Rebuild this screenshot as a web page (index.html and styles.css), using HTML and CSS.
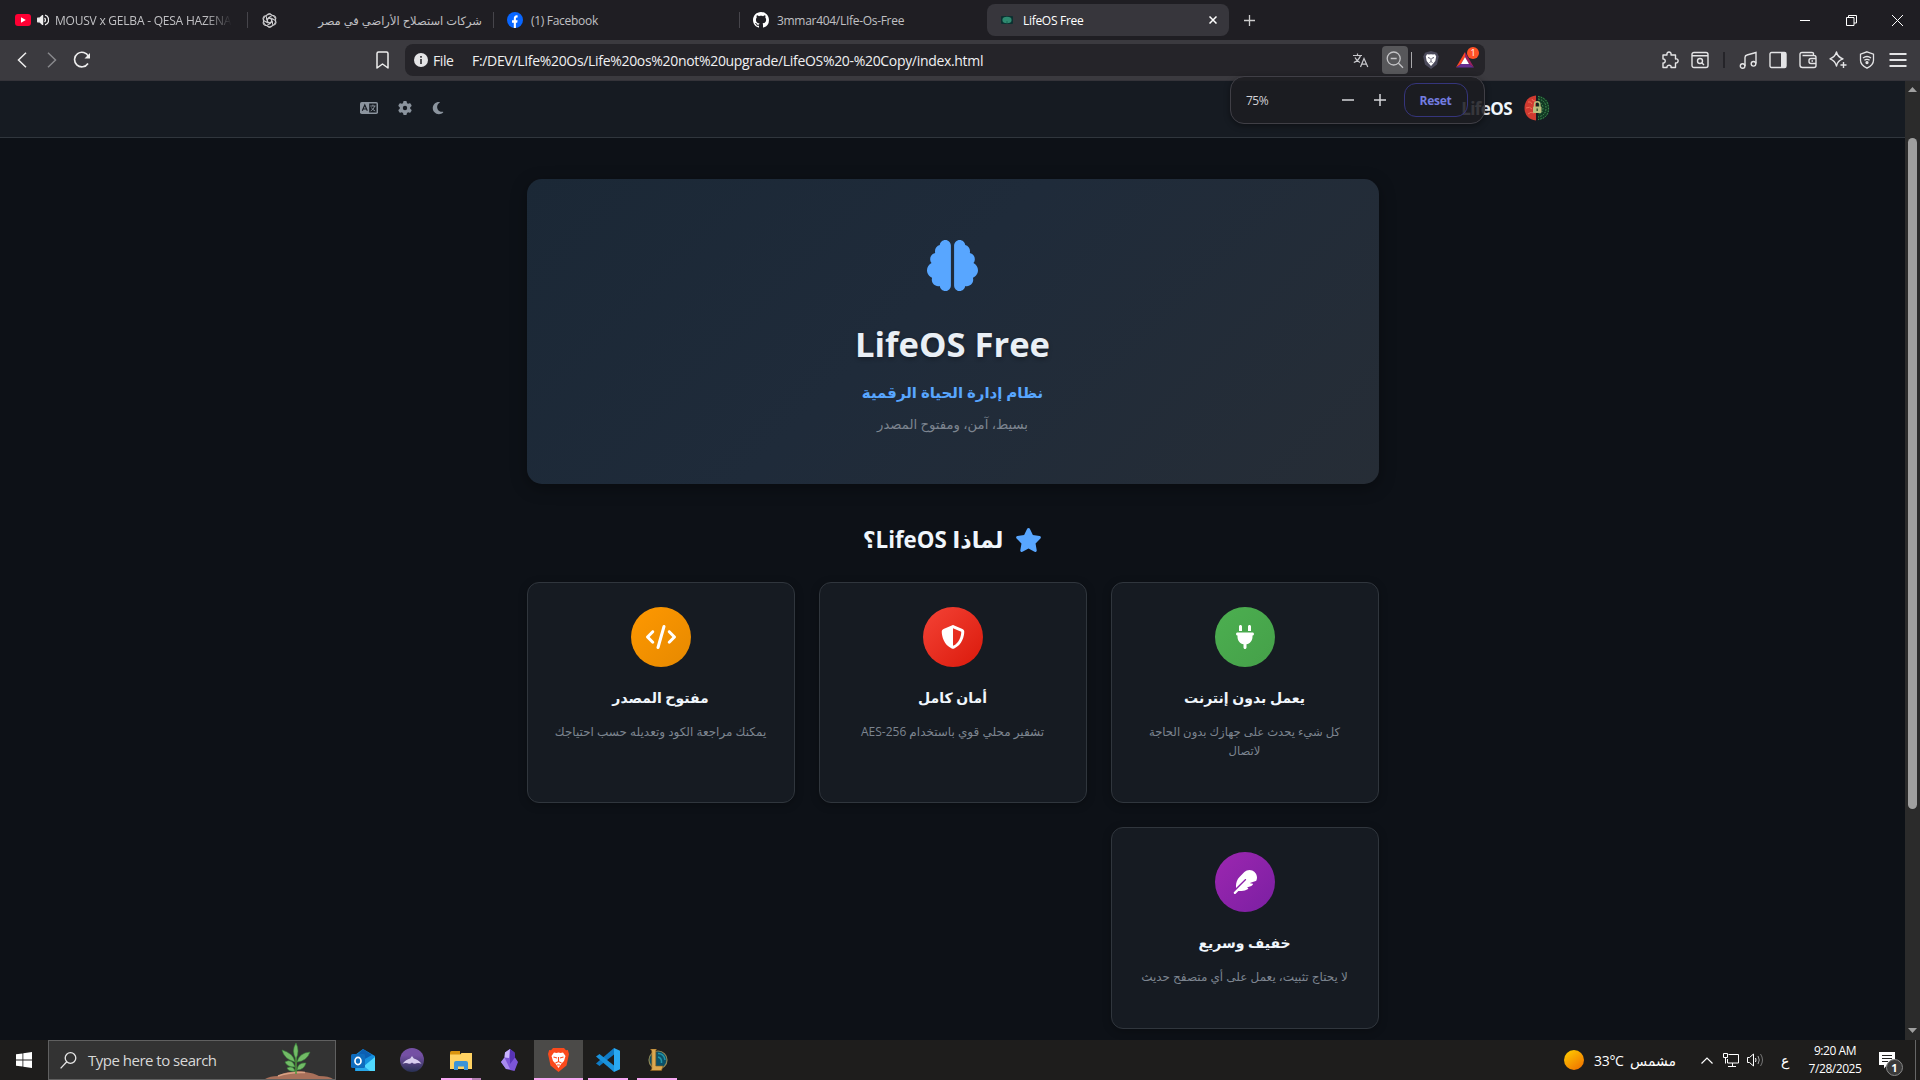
FILE: index.html
```
<!DOCTYPE html>
<html lang="en">
<head>
<meta charset="utf-8">
<title>LifeOS Free</title>
<link rel="stylesheet" href="styles.css">
</head>
<body>
<div class="screen">
  <div class="tabs">
    <div class="tab t-yt">
      <svg width="16" height="12" viewBox="0 0 16 12"><rect width="16" height="12" rx="3" fill="#f03"/><path d="M6 3.3v5.4L10.8 6z" fill="#fff"/></svg>
      <svg class="spk" width="12" height="12" viewBox="0 0 12 12" fill="none" stroke="#eee" stroke-width="1.3"><path d="M.7 4.2h2L5.6 1.6v8.8L2.7 7.8h-2z" fill="#eee" stroke-linejoin="round"/><path d="M7.5 4a2.6 2.6 0 0 1 0 4M8 1.2a5 5 0 0 1 0 9.6"/></svg>
      <span class="fade">MOUSV x GELBA - QESA HAZENA</span>
    </div>
    <i class="sep"></i>
    <div class="tab t-gpt">
      <svg width="15" height="15" viewBox="0 0 16 16" fill="none" stroke="#d0d0d2" stroke-width="1.050"><g id="k"><path d="M8 5.400L4.800 7.200V3.600A3 3 0 0 1 10.400 2.100M8 5.400l3.200 1.800"/></g><use href="#k" transform="rotate(60 8 8)"/><use href="#k" transform="rotate(120 8 8)"/><use href="#k" transform="rotate(180 8 8)"/><use href="#k" transform="rotate(240 8 8)"/><use href="#k" transform="rotate(300 8 8)"/><circle cx="8" cy="8" r="6.500"/></svg>
      <span class="ar" dir="rtl">شركات استصلاح الأراضي في مصر</span>
    </div>
    <i class="sep"></i>
    <div class="tab t-fb">
      <svg width="16" height="16" viewBox="0 0 16 16"><circle cx="8" cy="8" r="8" fill="#0866ff"/><path d="M6.8 16v-5.3H5V8.2h1.8V7c0-2.700 1.200-3.900 3.800-3.600v2.100c-1.200 0-1.700.1-1.700 1.300v1.400h1.700l-.4 2.500H8.900V16z" fill="#fff"/></svg>
      <span class="tx-fb">(1) Facebook</span>
    </div>
    <i class="sep"></i>
    <div class="tab t-gh">
      <svg width="16" height="16" viewBox="0 0 16 16" fill="#fff"><path d="M8 0C3.580 0 0 3.580 0 8c0 3.540 2.290 6.530 5.470 7.590.4.070.55-.17.55-.38 0-.19-.01-.82-.01-1.490-2.010.37-2.530-.49-2.690-.94-.09-.23-.48-.94-.82-1.130-.28-.15-.68-.52-.01-.53.63-.01 1.080.58 1.230.82.72 1.210 1.870.87 2.330.66.07-.52.28-.87.51-1.070-1.780-.2-3.640-.89-3.640-3.950 0-.87.31-1.590.82-2.150-.08-.2-.36-1.020.08-2.120 0 0 .67-.21 2.200.82.64-.18 1.320-.27 2-.27s1.360.09 2 .27c1.530-1.040 2.200-.82 2.200-.82.44 1.100.16 1.920.08 2.120.51.56.82 1.270.82 2.150 0 3.070-1.870 3.750-3.650 3.950.29.25.54.73.54 1.480 0 1.070-.01 1.930-.01 2.200 0 .21.15.46.55.38A8.010 8.010 0 0 0 16 8c0-4.420-3.580-8-8-8z"/></svg>
      <span class="tx-gh">3mmar404/LIfe-Os-Free</span>
    </div>
    <div class="tab active">
      <svg width="12" height="8" viewBox="0 0 12 8"><rect width="12" height="8" rx="1" fill="#0c3030"/><ellipse cx="6" cy="4" rx="4.600" ry="3.200" fill="#2f8a70"/><path d="M6 5v2" stroke="#0c4a40" stroke-width=".6"/></svg>
      <span class="tx-life">LifeOS Free</span>
      <svg class="x" width="8" height="8" viewBox="0 0 8 8" stroke="#fff" stroke-width="1.500"><path d="M.5.5l7 7M7.500.5l-7 7"/></svg>
    </div>
    <svg class="plus" width="11" height="11" viewBox="0 0 11 11" stroke="#ccc" stroke-width="1.300"><path d="M5.500 0v11M0 5.500h11"/></svg>
    <div class="win">
      <svg width="11" height="11" viewBox="0 0 11 11" stroke="#fff"><path d="M0 5.500h10"/></svg>
      <svg width="11" height="11" viewBox="0 0 11 11" stroke="#fff" fill="none"><path d="M.5 2.500h7.500v8H.5zM2.500 2.500v-2h8v7.500H8"/></svg>
      <svg width="11" height="11" viewBox="0 0 11 11" stroke="#fff"><path d="M0 0l11 11M11 0L0 11"/></svg>
    </div>
  </div>

  <div class="toolbar">
    <svg class="back" width="10" height="16" viewBox="0 0 10 16" fill="none" stroke="#eee" stroke-width="1.500"><path d="M9 .8 1.500 8 9 15.200"/></svg>
    <svg class="fwd" width="10" height="16" viewBox="0 0 10 16" fill="none" stroke="#88888c" stroke-width="1.500"><path d="M1 .8 8.500 8 1 15.200"/></svg>
    <svg class="reload" width="18" height="18" viewBox="0 0 18 18" fill="none" stroke="#eee" stroke-width="1.600"><path d="M15 12.500A7.300 7.300 0 1 1 15.500 5.500"/><path d="M17 2v5.500h-5.500z" fill="#eee" stroke="none"/></svg>
    <svg class="bm" width="13" height="18" viewBox="0 0 13 18" fill="none" stroke="#eee" stroke-width="1.500" stroke-linejoin="round"><path d="M1 2.500Q1 1 2.500 1h8Q12 1 12 2.500V17l-5.500-4L1 17z"/></svg>
    <div class="url">
      <svg width="14" height="14" viewBox="0 0 14 14"><circle cx="7" cy="7" r="7" fill="#e4e4e6"/><path d="M7 6v5M7 3v1.700" stroke="#2a292e" stroke-width="1.600"/></svg>
      <span class="file">File</span>
      <span class="path">F:/DEV/LIfe%20Os/Life%20os%20not%20upgrade/LifeOS%20-%20Copy/index.html</span>
      <div class="uicons">
        <svg width="16" height="15" viewBox="0 0 16 15" fill="none" stroke="#c8c8cc" stroke-width="1.200"><path d="M0 2.500h9M4.500.5v2M7.500 2.500Q6 7.500 .8 9.500M2 4.500q1.500 3.500 5 5M7.500 14l3.500-8.500L14.800 14M8.700 11.200h4.800"/></svg>
        <div class="zb"><svg width="18" height="18" viewBox="0 0 18 18" fill="none" stroke="#c4c4c7" stroke-width="1.300"><circle cx="7.700" cy="7.500" r="6.500"/><path d="M12.500 12.300l4.500 4.500M4.700 7.500h6"/></svg></div>
        <i></i>
        <svg width="16" height="18" viewBox="0 0 16 18"><path d="M8 0l6 1.800 1.800 3.700L14 13.500 8 18 2 13.500.2 5.500 2 1.800z" fill="#4c4b5c"/><path d="M4 3.300l2 .3 2-.4 2 .4 2-.3 1.200 2.200-.9 4.500-2 2.500L8 15l-2.300-2.500-2-2.500-.9-4.500z" fill="#fff"/><path d="M5 6.500l2 .8M11 6.500l-2 .8M8 7v3M6.500 11.500L8 10.500l1.500 1" stroke="#4c4b5c" stroke-width=".9" fill="none"/></svg>
        <div class="bat"><svg width="18" height="16" viewBox="0 0 18 16"><path d="M9 0v5L5 12l-5 3.500z" fill="#ff4724"/><path d="M9 0l9 15.500L13 12 9 5z" fill="#9e1f63"/><path d="M0 15.500L5 12h8l5 3.500z" fill="#662d91"/><path d="M9 5l4 7H5z" fill="#fff"/></svg><b>1</b></div>
      </div>
    </div>
    <div class="ext">
      <svg width="18" height="18" viewBox="0 0 18 18" fill="none" stroke="#e4e4e6" stroke-width="1.400" stroke-linejoin="round"><path d="M2 4h4c-1-4 5-4 4 0h4.500v4c3.500-1 3.500 4.500 0 4v4.500H10c1-3-4.500-3-4 0H2v-4.500c3 .5 3-4.500 0-4z"/></svg>
      <svg width="18" height="18" viewBox="0 0 18 18" fill="none" stroke="#e4e4e6" stroke-width="1.400"><rect x="1" y="1.500" width="16" height="15" rx="2"/><path d="M1 4.700h16M11 12l2 2"/><circle cx="9" cy="10" r="2.500"/></svg>
      <i></i>
      <svg width="18" height="18" viewBox="0 0 18 18" fill="none" stroke="#e4e4e6" stroke-width="1.400"><path d="M6 15V6.500Q6 4.500 8 4L17 1.500V12.500"/><circle cx="3.600" cy="15" r="2.300"/><circle cx="14.500" cy="12.800" r="2.300"/></svg>
      <svg width="18" height="18" viewBox="0 0 18 18" fill="none" stroke="#e4e4e6" stroke-width="1.400"><rect x="1" y="1.500" width="16" height="15" rx="1.500"/><path d="M12 2h5v14h-5z" fill="#e4e4e6" stroke="none"/></svg>
      <svg width="18" height="18" viewBox="0 0 18 18" fill="none" stroke="#e4e4e6" stroke-width="1.400"><path d="M14.500 4.500V2.500Q14.500 1.500 13 1.500H3Q1 1.500 1 3.500V14q0 2.500 2.500 2.500H15q2 0 2-2V6.500q0-2-2-2H3.500M17 7.500h-5q-2 0-2 2v1q0 2 2 2h5M12.500 10h1.500"/></svg>
      <svg width="18" height="18" viewBox="0 0 18 18" fill="none" stroke="#e4e4e6" stroke-width="1.400" stroke-linejoin="round"><path d="M7.500 1q1 5 6.500 6.800Q8.500 9.500 7.500 15 6 9.500 1 7.800 6 6 7.500 1zM14.500 11v6M11.500 14h6"/></svg>
      <svg width="16" height="18" viewBox="0 0 16 18" fill="none" stroke="#e4e4e6" stroke-width="1.300"><path d="M8 .8l6.500 2.400v6Q14.500 14 8 17.200 1.500 14 1.500 9.200v-6zM4 7q4-3 8 0M5.400 9.300q2.600-2 5.200 0"/><circle cx="8" cy="11.600" r="1" fill="#e4e4e6"/></svg>
      <svg class="burger" width="18" height="16" viewBox="0 0 18 16" stroke="#e4e4e6" stroke-width="1.800"><path d="M.5 2h17M.5 8h17M.5 14h17"/></svg>
    </div>
    <div class="zoompop">
      <span class="pct">75%</span>
      <svg class="zm" width="12" height="12" viewBox="0 0 12 12" stroke="#d6d6da" stroke-width="1.500"><path d="M0 6h12"/></svg>
      <svg class="zp" width="12" height="12" viewBox="0 0 12 12" stroke="#d6d6da" stroke-width="1.500"><path d="M0 6h12M6 0v12"/></svg>
      <span class="reset">Reset</span>
    </div>
  </div>

  <div class="view">
    <div class="page" dir="rtl">
      <div class="nav">
        <div class="brand">
          <svg width="26" height="26" viewBox="0 0 26 26"><path d="M12 .5v25C5 25 .5 20 .5 13S5 1 12 .5z" fill="#cf3a30"/><path d="M4 7q3-1 4 2M2 13q4-2 6 1M4 19q3-3 6-1M8 4q0 2 3 2" stroke="#f06a55" fill="none"/><path d="M14 .5q11 2 11.500 12.500Q25 23.500 14 25.500z" fill="#123a24"/><g fill="none" stroke="#4a9a58" stroke-dasharray="1.500 1.300"><path d="M14 1.500q10 1.500 10.500 11.500T14 24.500"/><path d="M14 4q8 1.500 8 9t-8 9M14 7q5 1 5 6t-5 6"/></g><path d="M10.500 12V9.500a2.700 2.700 0 0 1 5.400 0V12" fill="none" stroke="#b9bd7c" stroke-width="1.400"/><rect x="9" y="11.500" width="8.500" height="6.500" rx="1" fill="#b9bd7c"/><path d="M13.200 13.500v2.500" stroke="#3c5a35" stroke-width="1.500"/></svg>
          <span dir="ltr">LifeOS</span>
        </div>
        <div class="nicons">
          <svg width="12" height="14" viewBox="0 0 384 512" fill="#8b949e"><path d="M223.500 32C100 32 0 132.300 0 256S100 480 223.500 480c60.600 0 115.500-24.200 155.800-63.400c5-4.900 6.300-12.500 3.100-18.700s-10.100-9.700-17-8.500c-9.800 1.700-19.800 2.600-30.100 2.600c-96.900 0-175.500-78.800-175.500-176c0-65.800 36-123.100 89.300-153.300c6.100-3.500 9.200-10.500 7.700-17.300s-7.300-11.900-14.300-12.500c-6.300-.5-12.600-.8-19-.8z"/></svg>
          <svg width="14" height="14" viewBox="0 0 512 512" fill="#8b949e"><path d="M495.900 166.600c3.200 8.700 .5 18.400-6.400 24.600l-43.300 39.400c1.100 8.300 1.700 16.800 1.700 25.400s-.6 17.100-1.700 25.400l43.300 39.400c6.900 6.200 9.600 15.900 6.400 24.600c-4.400 11.900-9.700 23.300-15.800 34.300l-4.700 8.100c-6.600 11-14 21.400-22.100 31.200c-5.900 7.200-15.700 9.600-24.500 6.800l-55.700-17.700c-13.400 10.300-28.200 18.900-44 25.400l-12.500 57.100c-2 9.100-9 16.300-18.200 17.800c-13.800 2.300-28 3.500-42.500 3.500s-28.700-1.200-42.500-3.500c-9.200-1.500-16.200-8.700-18.200-17.800l-12.500-57.100c-15.800-6.500-30.600-15.100-44-25.400L83.100 425.900c-8.800 2.800-18.600 .3-24.500-6.800c-8.100-9.800-15.500-20.200-22.100-31.200l-4.700-8.100c-6.100-11-11.400-22.400-15.800-34.300c-3.200-8.700-.5-18.400 6.400-24.600l43.300-39.400C64.600 273.100 64 264.600 64 256s.6-17.100 1.700-25.400L22.400 191.200c-6.900-6.200-9.600-15.900-6.400-24.600c4.400-11.900 9.700-23.300 15.800-34.300l4.700-8.100c6.600-11 14-21.400 22.100-31.200c5.900-7.200 15.700-9.600 24.500-6.800l55.700 17.700c13.400-10.300 28.200-18.900 44-25.400l12.500-57.100c2-9.100 9-16.300 18.200-17.800C227.300 1.200 241.500 0 256 0s28.700 1.200 42.500 3.500c9.200 1.500 16.200 8.700 18.200 17.800l12.500 57.100c15.800 6.500 30.600 15.100 44 25.400l55.700-17.700c8.800-2.800 18.600-.3 24.500 6.800c8.100 9.800 15.500 20.200 22.100 31.200l4.700 8.100c6.100 11 11.400 22.400 15.800 34.300zM256 336a80 80 0 1 0 0-160 80 80 0 1 0 0 160z"/></svg>
          <svg width="18" height="12" viewBox="0 0 18 12"><rect width="18" height="12" rx="1.800" fill="#8b949e"/><rect x="9.200" y="1.500" width="7.300" height="9" fill="#161b22"/><path d="M2.300 8.800L4.800 3l2.500 5.800M3.200 7h3.200" fill="none" stroke="#161b22" stroke-width="1.100"/><path d="M10.200 4h5.400M12.900 2.600V4M14.700 4q-.8 3.400-4 5M11.400 5.500q1 2.300 3.800 3.500" fill="none" stroke="#8b949e" stroke-width=".9"/></svg>
        </div>
      </div>
      <div class="main">
        <div class="hero">
          <svg width="51" height="51" viewBox="0 0 512 512" fill="#58a6ff"><path d="M184 0c30.900 0 56 25.100 56 56V456c0 30.900-25.100 56-56 56c-28.900 0-52.700-21.900-55.700-50.100c-5.200 1.400-10.700 2.100-16.300 2.100c-35.300 0-64-28.700-64-64c0-7.400 1.300-14.600 3.600-21.200C21.400 367.400 0 338.200 0 304c0-31.900 18.700-59.500 45.800-72.300C37.100 220.800 32 207 32 192c0-30.700 21.600-56.300 50.400-62.600C80.800 123.900 80 118 80 112c0-29.900 20.600-55.100 48.300-62.100C131.300 21.900 155.100 0 184 0zM328 0c28.900 0 52.600 21.900 55.700 49.900c27.800 7 48.300 32.100 48.300 62.100c0 6-.8 11.900-2.400 17.400c28.800 6.200 50.400 31.900 50.400 62.600c0 15-5.100 28.800-13.800 39.700C493.300 244.500 512 272.100 512 304c0 34.200-21.400 63.400-51.600 74.800c2.300 6.600 3.600 13.800 3.600 21.200c0 35.300-28.700 64-64 64c-5.600 0-11.100-.7-16.300-2.100c-3 28.200-26.800 50.100-55.700 50.100c-30.900 0-56-25.100-56-56V56c0-30.900 25.100-56 56-56z"/></svg>
          <h1 dir="ltr">LifeOS Free</h1>
          <h3>نظام إدارة الحياة الرقمية</h3>
          <p>بسيط، آمن، ومفتوح المصدر</p>
        </div>
        <div class="why">
          <svg width="27" height="24" viewBox="0 0 576 512" fill="#58a6ff"><path d="M316.900 18C311.600 7 300.400 0 288.100 0s-23.400 7-28.800 18L195 150.300 51.400 171.500c-12 1.800-22 10.200-25.700 21.700s-.7 24.200 7.900 32.700L137.800 329 113.200 474.700c-2 12 3 24.200 12.900 31.300s23 8 33.800 2.300l128.300-68.500 128.300 68.500c10.800 5.700 23.900 4.900 33.800-2.300s14.900-19.300 12.900-31.300L438.500 329 542.700 225.900c8.600-8.500 11.700-21.200 7.900-32.700s-13.700-19.900-25.700-21.700L381.200 150.300 316.900 18z"/></svg>
          <h2>لماذا LifeOS؟</h2>
        </div>
        <div class="grid">
          <div class="card">
            <div class="ic green"><svg width="18" height="24" viewBox="0 0 384 512" fill="#fff"><path d="M96 0C78.300 0 64 14.300 64 32v96h64V32c0-17.700-14.300-32-32-32zM288 0c-17.700 0-32 14.300-32 32v96h64V32c0-17.700-14.300-32-32-32zM32 160c-17.700 0-32 14.300-32 32s14.300 32 32 32v32c0 77.400 55 142 128 156.800V480c0 17.700 14.300 32 32 32s32-14.300 32-32V412.800C297 398 352 333.400 352 256V224c17.700 0 32-14.300 32-32s-14.300-32-32-32H32z"/></svg></div>
            <h4>يعمل بدون إنترنت</h4>
            <p class="two">كل شيء يحدث على جهازك بدون الحاجة<br>لاتصال</p>
          </div>
          <div class="card">
            <div class="ic red"><svg width="24" height="24" viewBox="0 0 512 512" fill="#fff"><path d="M256 0c4.600 0 9.200 1 13.400 2.900L457.700 82.800c22 9.300 38.400 31 38.300 57.200c-.5 99.200-41.300 280.700-213.600 363.200c-16.700 8-36.100 8-52.800 0C57.300 420.700 16.500 239.200 16 140c-.1-26.200 16.300-47.900 38.300-57.200L242.700 2.900C246.800 1 251.400 0 256 0zm0 66.800V444.800C394 378 431.100 230.100 432 141.400L256 66.800l0 0z"/></svg></div>
            <h4>أمان كامل</h4>
            <p>تشفير محلي قوي باستخدام AES-256</p>
          </div>
          <div class="card">
            <div class="ic orange"><svg width="30" height="24" viewBox="0 0 640 512" fill="#fff"><path d="M392.800 1.200c-17-4.900-34.700 5-39.600 22l-128 448c-4.900 17 5 34.700 22 39.600s34.700-5 39.600-22l128-448c4.900-17-5-34.700-22-39.600zm80.600 120.100c-12.500 12.500-12.500 32.800 0 45.300L562.700 256l-89.400 89.400c-12.500 12.500-12.500 32.800 0 45.300s32.800 12.500 45.300 0l112-112c12.500-12.500 12.500-32.800 0-45.300l-112-112c-12.500-12.500-32.800-12.500-45.300 0zm-306.700 0c-12.500-12.500-32.800-12.500-45.300 0l-112 112c-12.500 12.500-12.500 32.800 0 45.300l112 112c12.500 12.500 32.800 12.500 45.300 0s12.500-32.800 0-45.300L77.300 256l89.400-89.400c12.500-12.500 12.500-32.800 0-45.300z"/></svg></div>
            <h4>مفتوح المصدر</h4>
            <p>يمكنك مراجعة الكود وتعديله حسب احتياجك</p>
          </div>
          <div class="card">
            <div class="ic purple"><svg width="24" height="24" viewBox="0 0 512 512" fill="#fff"><path d="M278.500 215.600L23 471c-9.400 9.400-9.400 24.600 0 33.900s24.600 9.400 33.900 0l57-57h68c49.700 0 97.900-14.400 139-41c11.100-7.200 5.500-23-7.800-23c-5.100 0-9.200-4.100-9.200-9.200c0-4.100 2.700-7.600 6.500-8.800l81-24.300c2.500-.8 4.800-2.100 6.700-4l22.400-22.400c10.100-10.100 2.900-27.300-11.300-27.300l-32.200 0c-5.100 0-9.200-4.100-9.200-9.200c0-4.100 2.700-7.600 6.500-8.800l112-33.600c4-1.200 7.400-3.900 9.300-7.700C506.400 207.600 512 184.100 512 160c0-41-16.300-80.300-45.300-109.300l-5.500-5.500C432.300 16.300 393 0 352 0s-80.300 16.300-109.300 45.300L139 149C91 197 64 262.100 64 330v55.300L253.600 195.800c6.200-6.200 16.400-6.200 22.600 0c5.400 5.400 6.100 13.600 2.200 19.800z"/></svg></div>
            <h4>خفيف وسريع</h4>
            <p>لا يحتاج تثبيت، يعمل على أي متصفح حديث</p>
          </div>
        </div>
      </div>
    </div>
    <div class="scroll">
      <svg width="9" height="5" viewBox="0 0 9 5" fill="#a0a0a0"><path d="M4.500 0L9 5H0z"/></svg>
      <div class="thumb"></div>
      <svg width="9" height="5" viewBox="0 0 9 5" fill="#a0a0a0"><path d="M4.500 5L9 0H0z"/></svg>
    </div>
  </div>

  <div class="taskbar">
    <div class="start"><svg width="16" height="16" viewBox="0 0 16 16" fill="#fff"><path d="M0 2.300l6.500-.9v6.200H0zM7.300 1.300L16 0v7.600H7.300zM0 8.400h6.500v6.200L0 13.700zM7.300 8.400H16V16l-8.700-1.200z"/></svg></div>
    <div class="search">
      <svg width="17" height="17" viewBox="0 0 17 17" fill="none" stroke="#e6e6e6" stroke-width="1.300"><circle cx="10.500" cy="6" r="5.300"/><path d="M6.800 9.800L.6 16.400"/></svg>
      <span>Type here to search</span>
      <svg class="plant" width="70" height="38" viewBox="0 0 70 38"><path d="M0 38Q5 35 13 35q7-4 13-4 8-2 14 0 9 1 14 4 10 0 14 3z" fill="#a8705a"/><path d="M13 35q10-4 27-3.500" stroke="#d9a184" stroke-width="1.500" fill="none"/><path d="M31 33V13" stroke="#4f9a3c" stroke-width="1.500"/><g fill="#72bb66" stroke="#37853b" stroke-width=".6"><path d="M31 18q-5-8 0-16 4 8 0 16zM30 21Q19 18 17 9q11 3 13 12zM32 21q2-9 13-10-3 9-13 10zM30 26q-8 0-10-5 7-4 10 5zM32 29q1-8 9-7-2 7-9 7zM30 30q-6 1-8-3 6-3 8 3z"/></g></svg>
    </div>
    <div class="app"><svg width="24" height="22" viewBox="0 0 24 22"><path d="M12 0l12 7v15H4V6z" fill="#1490df"/><path d="M12 0l9 6-9 5-7-4z" fill="#0b5fb3"/><path d="M24 8v14H7z" fill="#50d9ff"/><path d="M5 11l14 11H5z" fill="#28a8ea"/><rect y="5" width="14" height="14" rx="1.500" fill="#0f6cbd"/><ellipse cx="7" cy="12" rx="3" ry="3.600" fill="none" stroke="#fff" stroke-width="1.700"/></svg></div>
    <div class="app"><svg width="24" height="24" viewBox="0 0 24 24"><defs><linearGradient id="pg" x2="0" y2="1"><stop offset=".3" stop-color="#7550a4"/><stop offset="1" stop-color="#283052"/></linearGradient></defs><circle cx="12" cy="12" r="12" fill="url(#pg)"/><path d="M12 8l1.800 2.600Q18 11.500 21.500 15.800 18 14.300 15 15.800 13 15.800 12 14.500 11 15.800 9 15.800 6 14.300 2.500 15.800 6 11.500 10.200 10.600z" fill="#d9ceef"/></svg></div>
    <div class="app ul dual"><svg width="22" height="19" viewBox="0 0 22 19"><path d="M0 1.500Q0 0 1.500 0H10v5H0z" fill="#d9940e"/><path d="M0 3.500h10L11.500 2H22v16H0z" fill="#ffd262"/><path d="M4 19v-7q0-2 2-2h10q2 0 2 2v7h-4v-3.500H8V19z" fill="#3c94d8"/></svg></div>
    <div class="app"><svg width="17" height="22" viewBox="0 0 17 22"><path d="M9 0l4.500 3.500.5 5 3 4.500-3.500 9L5 20 0 13l3.500-4.500.5-5z" fill="#7c55d8"/><path d="M9 0L8 9l-4.500-.5.500-5z" fill="#c9b3ff"/><path d="M0 13l3.500-4.500L9 20H5z" fill="#a98bf0"/><path d="M9 0l4.500 3.500.5 5L9 15z" fill="#5733b5"/></svg></div>
    <div class="app ul on"><svg width="21" height="24" viewBox="0 0 21 24"><path d="M5 0h11l2 2.300 1.800-.2L21 6l-2.500 11.500L10.500 24l-8-6.500L0 6l1.200-3.900 1.800.2z" fill="#fb4a1c"/><path d="M6 4.500l2.500.5 2-.5 2 .5 2.500-.5L17.500 8 16 13l-2.500 2.500-3 4.500-3-4.500L5 13 3.500 8z" fill="#fff"/><path d="M5.500 9l3.500 1M15.500 9L12 10M10.500 9v4.500M7.500 15l3-1.500 3 1.500M9 17h3" stroke="#fb4a1c" stroke-width="1.100" fill="none"/></svg></div>
    <div class="app ul"><svg width="24" height="24" viewBox="0 0 24 24"><path d="M18 0l6 2.800v18.400L18 24z" fill="#29a9f2"/><path d="M18 0v6.500L3.500 18 0 15.500z" fill="#0f7bc6"/><path d="M18 24v-6.500L3.500 6 0 8.500z" fill="#1a92dc"/></svg></div>
    <div class="app ul"><svg width="22" height="22" viewBox="0 0 22 22"><circle cx="12" cy="11" r="9" fill="#0b5068" stroke="#8d8656" stroke-width="1.200"/><path d="M12 4.500q6 0 7 6.500M12 8q4 1 3.500 6" stroke="#2296a8" fill="none" stroke-width="1.500"/><path d="M4.500 0H10.500L9.800 1.500V17H17l-1.500 4.500H4.500L5.800 20V2z" fill="#dba850" stroke="#8a5c1c" stroke-width=".6"/></svg></div>
    <div class="tray">
      <i class="sun"></i><span class="deg">33°C</span><span class="w" dir="rtl">مشمس</span>
      <svg class="caret" width="12" height="7" viewBox="0 0 12 7" fill="none" stroke="#fff" stroke-width="1.200"><path d="M.5 6.500L6 1l5.500 5.500"/></svg>
      <svg class="net" width="16" height="14" viewBox="0 0 16 14" fill="none" stroke="#fff"><path d="M5.500 1.500h10v8.500h-11V6M9.500 10v3.500M5 13.500h8M.5.500h4v4h-4zM2.500 4.500v6"/></svg>
      <svg class="vol" width="17" height="14" viewBox="0 0 17 14" fill="none" stroke="#fff"><path d="M.5 4.500h2L6.500 1v12L2.500 9.500h-2z"/><path d="M8.500 5q1 2 0 4"/><path d="M11 3q2.500 4 0 8" stroke="#aaa"/><path d="M13.500 1q4 6 0 12" stroke="#777"/></svg>
      <span class="ain">ع</span>
      <div class="clock"><span>9:20 AM</span><span>7/28/2025</span></div>
      <div class="note"><svg width="16" height="17" viewBox="0 0 16 17"><path d="M0 0h16v13H8l-3 3.500V13H0z" fill="#fff"/><path d="M3 3.500h10M3 6.500h10M3 9.500h6" stroke="#222"/></svg><b>1</b></div>
      <i class="desk"></i>
    </div>
  </div>
</div>
</body>
</html>
```
FILE: styles.css
```
* { box-sizing: border-box; }
body { margin: 0; background: #0d1117; overflow: hidden; }
svg { display: block; flex: none; }
.screen { width: 1920px; height: 1080px; display: flex; flex-direction: column; font-family: "Open Sans", "Noto Sans", "DejaVu Sans", sans-serif; color: #eee; }
.screen span { white-space: nowrap; }

.tabs { height: 40px; background: #1f1e23; display: flex; align-items: center; font-size: 12px; color: #c0c0c3; flex: none; }
.tab { display: flex; align-items: center; flex: none; }
.sep { width: 1px; height: 16px; background: #46454b; flex: none; }
.t-yt { width: 247px; padding-left: 15px; }
.spk { margin: 0 6px; }
.fade { width: 177px; overflow: hidden; letter-spacing: -.22px; mask-image: linear-gradient(90deg, #000 85%, transparent); }
.t-gpt { width: 245px; padding: 0 11px 0 14px; justify-content: space-between; }
.ar { font-size: 11.500px; }
.t-fb { width: 245px; padding-left: 13px; gap: 8px; }
.t-gh { width: 247px; padding-left: 13px; gap: 8px; }
.tx-fb, .tx-gh, .tx-life { letter-spacing: -.3px; }
.active { width: 242px; height: 32px; padding: 0 12px 0 14px; background: #37363c; border-radius: 8px; color: #fff; }
.tx-life { margin-left: 10px; }
.x { margin-left: auto; }
.plus { margin-left: 15px; }
.win { margin-left: auto; display: flex; gap: 35px; padding-right: 17px; }

.toolbar { position: relative; z-index: 2; height: 41px; background: #3b3a3f; border-bottom: 1px solid #35343a; display: flex; align-items: center; font-size: 14px; flex: none; }
.back { margin-left: 17px; }
.fwd { margin-left: 20px; }
.reload { margin-left: 16px; }
.bm { margin-left: 285px; }
.url { margin-left: 16px; width: 1080px; height: 32px; background: #252429; border-radius: 8px; display: flex; align-items: center; padding-left: 9px; }
.file { margin-left: 5px; width: 39px; letter-spacing: -.4px; }
.path { color: #f0f0f2; letter-spacing: -.32px; }
.uicons { margin-left: auto; display: flex; align-items: center; padding-right: 11px; }
.zb { width: 26px; height: 28px; border-radius: 4px; background: #57575a; margin: 0 3px 0 13px; display: grid; place-items: center; }
.uicons i { width: 1px; height: 16px; background: #a8a8ab; margin-right: 11px; }
.bat { position: relative; margin-left: 17px; }
.bat b { position: absolute; left: 11px; top: -5px; width: 12px; height: 12px; border-radius: 6px; background: #ff5226; color: #fff; font-size: 9px; line-height: 12px; text-align: center; font-weight: 400; }
.ext { margin-left: auto; display: flex; align-items: center; gap: 12px; padding-right: 13px; }
.ext i { width: 2px; height: 16px; background: #252429; margin: 0 1px 0 2px; }
.ext i + svg { margin-left: 1px; }
.ext .burger { margin-left: 2px; }
.zoompop { position: absolute; left: 1230px; top: 36px; width: 255px; height: 48px; border: 1px solid #403f46; border-radius: 14px; background: rgba(29, 28, 33, .88); box-shadow: 0 2px 6px rgba(0,0,0,.4); display: flex; align-items: center; padding-left: 15px; font-size: 12px; }
.pct { width: 96px; letter-spacing: -.5px; color: #d0d0d4; }
.zp { margin-left: 20px; }
.reset { margin-left: 18px; width: 64px; height: 34px; border: 1px solid #35357c; border-radius: 12px; color: #737de0; font-weight: 700; display: grid; place-items: center; letter-spacing: -.3px; padding-right: 1px; }

.view { flex: 1; display: flex; min-height: 0; }
.page { flex: 1; background: #0d1117; overflow: hidden; }
.nav { height: 57px; background: #161b22; border-bottom: 1px solid #30363d; display: flex; justify-content: space-between; align-items: center; padding: 0 355px 2px 360px; }
.brand { display: flex; align-items: center; gap: 12px; font-weight: 700; font-size: 17px; color: #f0f6fc; letter-spacing: -.6px; }
.nicons { display: flex; align-items: center; gap: 20px; }
.main { width: 852px; margin: 41px auto 0; }
.hero { height: 305px; border-radius: 15px; background: linear-gradient(135deg, #1b2838, #262d37); background: linear-gradient(135deg, #1b2836, #1f2b3a 45%, #262d36); box-shadow: 0 4px 16px rgba(0,0,0,.35); display: flex; flex-direction: column; align-items: center; padding-top: 61px; }
h1, h2, h3, h4, p { margin: 0; white-space: nowrap; }
h1 { margin-top: 25px; font-size: 34.600px; line-height: 56px; color: #e9eff5; font-weight: 700; text-shadow: 0 2px 4px rgba(0,0,0,.3); }
h3 { margin-top: 7px; font-size: 15px; line-height: 26px; color: #58a6ff; font-weight: 700; }
.hero p { margin-top: 7px; font-size: 13.200px; line-height: 24px; color: #7d8590; }
.why { height: 98px; display: flex; justify-content: center; align-items: center; gap: 12px; padding-top: 13px; }
h2 { font-size: 22.300px; font-weight: 700; color: #f0f6fc; }
.grid { display: grid; grid-template-columns: repeat(3, 1fr); grid-template-rows: 221px 202px; gap: 24px; }
.card { background: #161b22; border: 1px solid #30363d; border-radius: 12px; padding-top: 24px; display: flex; flex-direction: column; align-items: center; text-align: center; box-shadow: 0 2px 8px rgba(0,0,0,.25); }
.ic { width: 60px; height: 60px; border-radius: 50%; display: grid; place-items: center; }
.green { background: linear-gradient(135deg, #4caf50, #45a049); }
.red { background: linear-gradient(135deg, #f44336, #da190b); }
.orange { background: linear-gradient(135deg, #ff9800, #e68900); }
.purple { background: linear-gradient(135deg, #9c27b0, #7b1fa2); }
h4 { margin-top: 18px; font-size: 14px; line-height: 26px; color: #f0f6fc; }
.card p { margin-top: 11px; font-size: 12px; line-height: 19px; color: #7d8590; }
.card .two { font-size: 11.600px; }
.scroll { width: 15px; background: #2b2b2b; display: flex; flex-direction: column; align-items: center; padding: 6px 0 7px; }
.thumb { width: 9px; height: 671px; border-radius: 5px; background: #9f9f9f; margin: 46px 0 auto; }

.taskbar { height: 40px; background: #1e1d1c; display: flex; flex: none; color: #fff; }
.start { width: 48px; display: grid; place-items: center; }
.search { width: 288px; background: #333; border: 1px solid #606060; display: flex; align-items: center; padding-left: 11px; font-size: 15px; color: #d8d8d8; }
.search span { margin-left: 11px; letter-spacing: -.5px; }
.plant { margin-left: auto; }
.app { width: 49px; display: flex; align-items: center; justify-content: center; position: relative; }
.search + .app { margin-left: 2px; }
.ul::after { content: ""; position: absolute; left: 5px; right: 4px; bottom: 0; height: 2px; background: #f8a8f2; }
.dual::after { background: linear-gradient(90deg, #f8a8f2 78%, #b57fb2 78%); }
.on { background: #4b4a48; }
.on::after { left: 0; right: 0; }
.tray { margin-left: auto; display: flex; align-items: center; font-size: 14px; }
.sun { width: 20px; height: 20px; border-radius: 50%; background: linear-gradient(145deg, #ffd000, #ef6a00); }
.deg { margin-left: 10px; width: 39px; letter-spacing: -.3px; }
.w { width: 43px; }
.caret { margin-left: 25px; }
.net { margin-left: 10px; }
.vol { margin-left: 8px; }
.ain { margin-left: 17px; width: 22px; }
.clock { width: 64px; display: flex; flex-direction: column; align-items: center; font-size: 12px; line-height: 18px; letter-spacing: -.45px; }
.note { position: relative; margin-left: 12px; width: 36px; }
.note b { position: absolute; left: 7px; top: 7px; width: 17px; height: 17px; border-radius: 50%; background: #3a3a3a; border: 1px solid #888; font-size: 11px; line-height: 15px; text-align: center; }
.desk { width: 5px; height: 40px; border-left: 1px solid #666; }
```
